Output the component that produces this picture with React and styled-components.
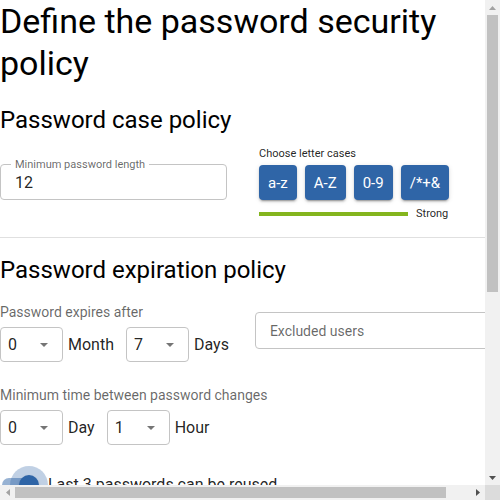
import React from 'react';
import styled, { createGlobalStyle } from 'styled-components';

const GlobalStyle = createGlobalStyle`
  html, body {
    margin: 0;
    padding: 0;
    background: #fff;
    overflow: hidden;
  }
  body {
    font-family: Roboto, "Noto Sans", Arial, sans-serif;
    color: rgba(0, 0, 0, 0.87);
  }
  * {
    box-sizing: border-box;
  }
`;

// window frame: scrolled content plus classic scrollbars
const Frame = styled.div`
  display: grid;
  grid-template-columns: 485px 15px;
  grid-template-rows: 485px 15px;
  width: 500px;
  height: 500px;
`;

const Content = styled.div`
  overflow: hidden;
`;

const ScrollBar = styled.div`
  display: flex;
  flex-direction: ${(p) => (p.$vertical ? 'column' : 'row')};
  background: #f1f1f1;
`;

const ArrowButton = styled.div`
  display: flex;
  align-items: center;
  justify-content: center;
  width: 15px;
  height: 15px;
  flex-shrink: 0;
`;

const ScrollTrack = styled.div`
  flex: 1;
  display: flex;
  flex-direction: ${(p) => (p.$vertical ? 'column' : 'row')};
  padding: ${(p) => (p.$vertical ? '0 2px' : '2px 0')};
`;

const ScrollThumb = styled.div`
  flex: 0 0 ${(p) => p.$size}px;
  background: #c1c1c1;
`;

const Corner = styled.div`
  background: #dcdcdc;
`;

const Page = styled.div`
  width: 513px;
  min-height: 802px;
`;

const Title = styled.h1`
  margin: 0;
  font-size: 34px;
  line-height: 42px;
  font-weight: 400;
  color: #000;
`;

const SectionTitle = styled.h2`
  margin: ${(p) => p.$top}px 0 ${(p) => p.$bottom}px;
  font-size: 24px;
  line-height: 32px;
  font-weight: 400;
  color: #000;
`;

const CaseRow = styled.div`
  display: flex;
  align-items: flex-start;
  gap: 32px;
`;

const OutlinedField = styled.div`
  position: relative;
  display: flex;
  align-items: center;
  width: ${(p) => p.$width}px;
  height: ${(p) => p.$height}px;
  margin-top: ${(p) => p.$top || 0}px;
  padding: 0 14px;
  border: 1px solid #c4c4c4;
  border-radius: 4px;
  font-size: ${(p) => p.$size || 16}px;
  color: ${(p) => (p.$placeholder ? 'rgba(0,0,0,0.6)' : 'rgba(0,0,0,0.87)')};
  flex-shrink: 0;
`;

const FloatingLabel = styled.span`
  position: absolute;
  top: -7px;
  left: 10px;
  padding: 0 4px;
  background: #fff;
  font-size: 11px;
  line-height: 13px;
  color: rgba(0, 0, 0, 0.6);
  white-space: nowrap;
`;

const CaseColumn = styled.div`
  display: flex;
  flex-direction: column;
`;

const SmallLabel = styled.div`
  font-size: 11px;
  line-height: 13px;
  color: rgba(0, 0, 0, 0.87);
`;

const ButtonRow = styled.div`
  display: flex;
  gap: 8px;
  margin-top: 5px;
`;

const CaseButton = styled.button`
  height: 35px;
  padding: 0 9px;
  border: none;
  border-radius: 4px;
  background: #2f65a7;
  color: #fff;
  font-family: inherit;
  font-size: 15px;
  box-shadow: 0 3px 1px -2px rgba(0, 0, 0, 0.2), 0 2px 2px 0 rgba(0, 0, 0, 0.14),
    0 1px 5px 0 rgba(0, 0, 0, 0.12);
  cursor: pointer;
`;

const StrengthRow = styled.div`
  display: flex;
  align-items: center;
  gap: 8px;
  margin-top: 7px;
`;

const StrengthBar = styled.div`
  width: 149px;
  height: 4px;
  background: #84b51e;
`;

const Divider = styled.hr`
  margin: 17px 0 0;
  border: none;
  height: 1px;
  background: #e0e0e0;
`;

const ExpireRow = styled.div`
  display: flex;
  align-items: flex-start;
  gap: 26px;
`;

const Group = styled.div`
  display: flex;
  flex-direction: column;
  margin-top: ${(p) => p.$top || 0}px;
`;

const Caption = styled.div`
  font-size: 14px;
  line-height: 20px;
  color: rgba(0, 0, 0, 0.6);
  white-space: nowrap;
`;

const UnitRow = styled.div`
  display: flex;
  align-items: center;
  gap: 12px;
  margin-top: 5px;
`;

const Unit = styled.div`
  display: flex;
  align-items: center;
  gap: 5px;
  font-size: 16px;
`;

const SelectBox = styled.div`
  display: flex;
  align-items: center;
  justify-content: space-between;
  width: 63px;
  height: 35px;
  padding: 0 14px 0 7px;
  border: 1px solid #c4c4c4;
  border-radius: 4px;
  font-size: 16px;
`;

const SwitchRow = styled.label`
  display: flex;
  align-items: center;
  margin-top: ${(p) => p.$top}px;
  font-size: 16px;
  line-height: 24px;
  white-space: nowrap;
`;

const SwitchRoot = styled.span`
  position: relative;
  width: 58px;
  height: 38px;
  margin-left: -10px;
  flex-shrink: 0;
`;

const Track = styled.span`
  position: absolute;
  left: 12px;
  top: 12px;
  width: 34px;
  height: 14px;
  border-radius: 7px;
  background: ${(p) => (p.$on ? 'rgba(47, 101, 167, 0.5)' : 'rgba(0,0,0,0.38)')};
`;

const Thumb = styled.span`
  position: absolute;
  left: ${(p) => (p.$on ? 29 : 9)}px;
  top: 9px;
  width: 20px;
  height: 20px;
  border-radius: 50%;
  background: ${(p) => (p.$on ? '#2f65a7' : '#fafafa')};
  box-shadow: 0 2px 1px -1px rgba(0, 0, 0, 0.2), 0 1px 1px 0 rgba(0, 0, 0, 0.14),
    0 1px 3px 0 rgba(0, 0, 0, 0.12);

  &::before {
    content: '';
    display: ${(p) => (p.$focus ? 'block' : 'none')};
    position: absolute;
    left: -9px;
    top: -9px;
    width: 38px;
    height: 38px;
    border-radius: 50%;
    background: rgba(47, 101, 167, 0.3);
  }
`;

const SaveButton = styled(CaseButton)`
  margin-top: 24px;
  padding: 0 16px;
  font-size: 14px;
  text-transform: uppercase;
`;

const Caret = () => (
  <svg width="8" height="4" viewBox="0 0 8 4">
    <polygon points="0,0 8,0 4,4" fill="#757575" />
  </svg>
);

const arrowShapes = {
  up: '0,4 3.5,0 7,4',
  down: '0,0 7,0 3.5,4',
  left: '4,0 4,7 0,3.5',
  right: '0,0 0,7 4,3.5',
};

const Arrow = ({ dir, active }) => {
  const flat = dir === 'up' || dir === 'down';
  return (
    <ArrowButton>
      <svg width={flat ? 7 : 4} height={flat ? 4 : 7}>
        <polygon points={arrowShapes[dir]} fill={active ? '#505050' : '#a3a3a3'} />
      </svg>
    </ArrowButton>
  );
};

const Select = ({ value }) => (
  <SelectBox>
    <span>{value}</span>
    <Caret />
  </SelectBox>
);

const Toggle = ({ on, focus, children, top }) => (
  <SwitchRow $top={top}>
    <SwitchRoot>
      <Track $on={on} />
      <Thumb $on={on} $focus={focus} />
    </SwitchRoot>
    <span>{children}</span>
  </SwitchRow>
);

const cases = ['a-z', 'A-Z', '0-9', '/*+&'];

export default function App() {
  return (
    <Frame>
      <GlobalStyle />
      <Content>
        <Page>
          <Title>Define the password security policy</Title>

          <SectionTitle $top={20} $bottom={11}>Password case policy</SectionTitle>
          <CaseRow>
            <OutlinedField $width={227} $height={36} $top={17}>
              <FloatingLabel>Minimum password length</FloatingLabel>
              12
            </OutlinedField>
            <CaseColumn>
              <SmallLabel>Choose letter cases</SmallLabel>
              <ButtonRow>
                {cases.map((c) => (
                  <CaseButton key={c}>{c}</CaseButton>
                ))}
              </ButtonRow>
              <StrengthRow>
                <StrengthBar />
                <SmallLabel>Strong</SmallLabel>
              </StrengthRow>
            </CaseColumn>
          </CaseRow>

          <Divider />

          <SectionTitle $top={16} $bottom={16}>Password expiration policy</SectionTitle>
          <ExpireRow>
            <Group>
              <Caption>Password expires after</Caption>
              <UnitRow>
                <Unit>
                  <Select value="0" />
                  Month
                </Unit>
                <Unit>
                  <Select value="7" />
                  Days
                </Unit>
              </UnitRow>
            </Group>
            <OutlinedField $width={256} $height={37} $top={10} $size={14} $placeholder>
              Excluded users
            </OutlinedField>
          </ExpireRow>

          <Group $top={23}>
            <Caption>Minimum time between password changes</Caption>
            <UnitRow>
              <Unit>
                <Select value="0" />
                Day
              </Unit>
              <Unit>
                <Select value="1" />
                Hour
              </Unit>
            </UnitRow>
          </Group>

          <Toggle on focus top={21}>Last 3 passwords can be reused</Toggle>
          <Toggle top={8}>Force password change at first login</Toggle>
          <Toggle top={8}>Lock account after 5 failed attempts</Toggle>

          <SaveButton>Save policy</SaveButton>
        </Page>
      </Content>

      <ScrollBar $vertical>
        <Arrow dir="up" />
        <ScrollTrack $vertical>
          <ScrollThumb $size={277} />
        </ScrollTrack>
        <Arrow dir="down" active />
      </ScrollBar>

      <ScrollBar>
        <Arrow dir="left" />
        <ScrollTrack>
          <ScrollThumb $size={431} />
        </ScrollTrack>
        <Arrow dir="right" active />
      </ScrollBar>

      <Corner />
    </Frame>
  );
}
